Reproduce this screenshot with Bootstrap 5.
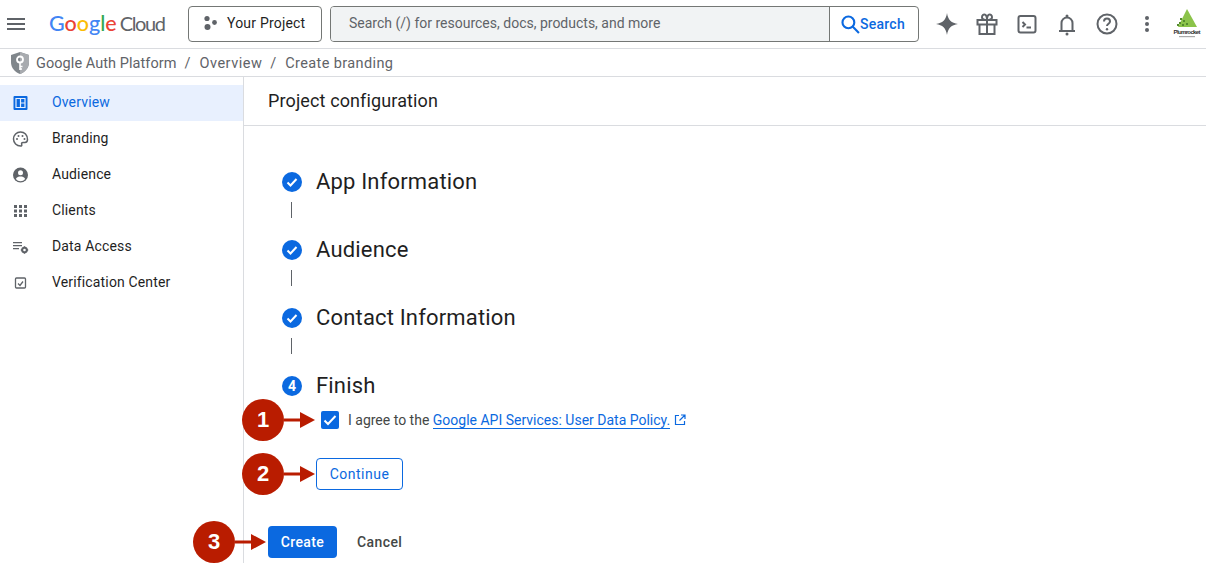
<!doctype html>
<html lang="en"><head><meta charset="utf-8"><title>Project configuration</title>
<link href="https://cdn.jsdelivr.net/npm/bootstrap@5.3.0/dist/css/bootstrap.min.css" rel="stylesheet">
<style>
html,body{height:100%;overflow:hidden}
body{font-family:Roboto,"Liberation Sans",sans-serif;color:#1f1f1f;font-size:14px;background:#fff;position:relative}
.topbar{height:49px;border-bottom:1px solid #dadce0;padding:0 0 0 7px}
.burger{width:18px;height:12px;border-top:2px solid #5f6368;border-bottom:2px solid #5f6368;position:relative;margin-right:24px;flex:none}
.burger::after{content:"";position:absolute;left:0;right:0;top:3px;height:2px;background:#5f6368}
.gc-logo{font-family:Lato,Roboto,sans-serif;font-size:21.500px;width:139px;line-height:1;margin-top:-1px;white-space:nowrap;flex:none}
.gc-logo b{font-weight:500}
.g-b{color:#4285f4}.g-r{color:#ea4335}.g-y{color:#fbbc04}.g-g{color:#34a853}.gc-logo .g-n{color:#5f6368;margin-left:3px;font-size:20px;font-weight:400;letter-spacing:-1.400px}
.proj-btn{width:134px;height:36px;border:1px solid #747775;border-radius:4px;background:#fff;font-size:14px;color:#1f1f1f;padding:0 0 2px 13px;letter-spacing:.2px;margin-right:8px;flex:none}
.proj-btn svg{margin-right:9px}
.searchbox{height:36px;width:589px;border:1px solid #747775;border-radius:4px;overflow:hidden;flex:none}
.search-in{flex:1;background:#f1f3f4;color:#5f6368;font-size:14px;padding-left:18px;padding-bottom:2px;border-right:1px solid #747775}
.search-go{width:88px;color:#0b69e0;font-weight:500;font-size:14px;padding-left:11px;gap:0;letter-spacing:.25px}
.tools{margin-left:16px;gap:16px;flex:none}
.tool{width:24px;height:24px;flex:none}
.brand-mark{margin-left:-2px;flex:none}
.brand-mark text{font-family:"Liberation Sans",sans-serif}
.crumbs{height:28px;border-bottom:1px solid #dadce0;padding:3px 0 0 10px;color:#5f6368;font-size:14.500px}
.crumbs .sep{margin:0 8px}
.crumbs .sep-a{margin-right:9px}
.crumbs svg{margin-right:6px;margin-top:-3px}
.crumb-a{letter-spacing:.06px}.crumb-b{letter-spacing:.5px}.crumb-c{letter-spacing:.38px}
.shell{height:calc(100% - 77px)}
.sidebar{width:244px;border-right:1px solid #dadce0;padding-top:8px;flex:none}
.sideitem{height:36px;padding:0 0 2px 10px;color:#1f1f1f;font-size:14px;gap:21px;text-decoration:none;letter-spacing:.15px}
.sideitem svg{width:21px;height:18px;flex:none;margin-top:2px}
.sideitem.on{background:#e8f0fe;color:#0b69e0}
.main-pane{flex:1;min-width:0}
.pane-head{height:49px;border-bottom:1px solid #dadce0;padding-left:24px;font-size:18px;font-weight:400;margin:0;color:#1f1f1f;letter-spacing:.12px}
.steps{padding:38px 0 0 38px}
.step{height:36px;gap:14px;font-size:22px;color:#1f1f1f;letter-spacing:.17px;padding-bottom:1px}
.step svg{width:20px;height:20px;flex:none}
.num{width:20px;height:20px;border-radius:50%;background:#0b69e0;color:#fff;font-size:14px;font-weight:700;margin-top:1px;flex:none}
.conn{height:32px;padding:2px 0 0 9px}
.conn i{display:block;width:1px;height:16px;background:#5f6368}
.agree{padding-left:39px;height:24px;margin-top:4px;gap:9px;font-size:14px;color:#444746}
.tick{width:18px;height:18px;background:#0b69e0;border-radius:2px;flex:none}
.agree a{color:#0b69e0;text-decoration:none;border-bottom:1px solid #0b69e0;line-height:18px}
.agree svg:last-child{margin-left:-5px}
.cont-btn{margin:26px 0 0 34px;width:87px;height:32px;border:1px solid #0b69e0;border-radius:4px;background:#fff;color:#0b69e0;font-size:14px;font-weight:400;padding:1px 0 0;letter-spacing:.5px;display:block}
.acts{margin:36px 0 0 -14px;gap:20px}
.make-btn{width:69px;height:32px;background:#0b69e0;border:0;border-radius:4px;color:#fff;font-weight:500;padding:1px 0 0;font-size:14px;letter-spacing:.35px}
.stop-btn{border:0;background:none;color:#444746;font-weight:500;padding:1px 0 0;font-size:14px;letter-spacing:.4px}
.callout{position:absolute;display:flex;align-items:center;height:42px;width:88px}
.callout span{width:42px;height:42px;border-radius:50%;background:#b91c00;color:#fff;font:700 22px "Liberation Sans",sans-serif;display:flex;align-items:center;justify-content:center;flex:none}
</style></head><body>
<header class="topbar d-flex align-items-center">
  <div class="burger"></div>
  <div class="gc-logo"><b class="g-b">G</b><b class="g-r">o</b><b class="g-y">o</b><b class="g-b">g</b><b class="g-g">l</b><b class="g-r">e</b><b class="g-n">Cloud</b></div>
  <button class="proj-btn d-flex align-items-center"><svg width="16" height="16" viewBox="0 0 16 16" fill="#5f6368"><circle cx="5" cy="3.500" r="2.600"/><circle cx="12.500" cy="7.500" r="2.400"/><circle cx="5.500" cy="12" r="3"/></svg>Your Project</button>
  <div class="searchbox d-flex">
    <div class="search-in d-flex align-items-center">Search (/) for resources, docs, products, and more</div>
    <div class="search-go d-flex align-items-center"><svg width="19" height="19" viewBox="0 0 18 18" fill="none" stroke="#0b69e0" stroke-width="2"><circle cx="7" cy="7" r="5.600"/><path d="M11 11l6 6"/></svg>Search</div>
  </div>
  <div class="tools d-flex align-items-center">
    <svg class="tool" viewBox="0 0 24 24" fill="#5f6368"><path d="M12 1c.8 6.500 4.500 10.200 11 11-6.500.8-10.200 4.500-11 11-.8-6.500-4.500-10.200-11-11 6.500-.8 10.200-4.500 11-11z"/></svg>
    <svg class="tool" viewBox="0 0 24 24" fill="none" stroke="#5f6368" stroke-width="2"><path d="M2.500 8h19v4.500h-19zM4.500 12.500V22h15v-9.500M12 8v14M12 8C9 8 7 6.800 7 5.200S8.500 2 10 2.700 12 6 12 8zM12 8c3 0 5-1.200 5-2.800S15.500 2 14 2.700 12 6 12 8z"/></svg>
    <svg class="tool" viewBox="0 0 24 24" fill="none" stroke="#5f6368" stroke-width="2"><rect x="3.500" y="4" width="17" height="16.500" rx="2"/><path d="M7.500 10l2.500 2.500-2.500 2.500M11.500 15.500h4.500"/></svg>
    <svg class="tool" viewBox="0 0 24 24" fill="none" stroke="#5f6368" stroke-width="2"><path d="M4 19h16M6.500 19v-8a5.500 5.500 0 0 1 11 0v8"/><circle cx="12" cy="22" r="1.500" fill="#5f6368" stroke="none"/><circle cx="12" cy="4" r="1.500" fill="#5f6368" stroke="none"/></svg>
    <svg class="tool" viewBox="0 0 24 24" fill="none" stroke="#5f6368" stroke-width="2"><circle cx="12" cy="12" r="9.500"/><path d="M9 9.500a3 3 0 0 1 6 0c0 2.200-3 2.300-3 4.500"/><circle cx="12" cy="17.300" r="1.200" fill="#5f6368" stroke="none"/></svg>
    <svg class="tool" viewBox="0 0 24 24" fill="#5f6368"><circle cx="12" cy="6" r="2"/><circle cx="12" cy="12" r="2"/><circle cx="12" cy="18" r="2"/></svg>
    <svg class="brand-mark" width="28" height="30" viewBox="0 0 28 30"><polygon points="14,0 24,18 5,18" fill="#8bc34a"/><g fill="#558b2f"><rect x="6" y="13" width="2" height="2"/><rect x="9" y="15" width="2" height="2"/><rect x="4" y="15" width="2" height="2"/><rect x="7" y="9" width="2" height="2"/><rect x="10" y="11" width="2" height="2"/><rect x="13" y="14" width="2" height="2"/></g><text x="14" y="24.500" text-anchor="middle" font-size="6" font-weight="700" fill="#333" textLength="27">Plumrocket</text><rect x="6" y="27" width="16" height="1.200" fill="#aaa"/></svg>
  </div>
</header>
<nav class="crumbs d-flex align-items-center">
  <svg width="20" height="22" viewBox="0 0 20 22"><path d="M10 0l9 3v7c0 6-4 10-9 12C5 20 1 16 1 10V3z" fill="#80868b"/><path d="M10 0l9 3v7c0 6-4 10-9 12z" fill="#a8abaf"/><circle cx="10" cy="7.500" r="3" fill="none" stroke="#fff" stroke-width="1.800"/><path d="M10 10.500V18M10 14.500h2.500M10 17h2" stroke="#fff" stroke-width="1.600"/></svg>
  <span class="crumb-a">Google Auth Platform</span><span class="sep sep-a">/</span><span class="crumb-b">Overview</span><span class="sep sep-a">/</span><span class="crumb-c">Create branding</span>
</nav>
<div class="shell d-flex">
  <aside class="sidebar">
    <a class="sideitem on d-flex align-items-center" href="#"><svg viewBox="0 0 21 18" fill="none"><rect x="3.500" y="2" width="14" height="14" rx="1" fill="#0b69e0"/><path d="M6 4.500h9v9H6zM10.500 4.500v9M10.500 9H15" stroke="#e8f0fe" stroke-width="1.200"/></svg>Overview</a>
    <a class="sideitem d-flex align-items-center" href="#"><svg viewBox="0 0 21 18" fill="none"><path d="M10.500 2a7 7 0 1 0 0 14c1.200 0 1.500-.8 1.200-1.600-.4-1 .2-2 1.300-2h2c1.500 0 2.500-1 2.500-2.900C17.500 5 14.500 2 10.500 2z" stroke="#5f6368" stroke-width="1.500"/><g fill="#5f6368"><circle cx="7" cy="9" r="1"/><circle cx="8.500" cy="6" r="1"/><circle cx="12.500" cy="6" r="1"/><circle cx="14.500" cy="9" r="1"/></g></svg>Branding</a>
    <a class="sideitem d-flex align-items-center" href="#"><svg viewBox="0 0 21 18"><circle cx="10.500" cy="9" r="7.500" fill="#5f6368"/><circle cx="10.500" cy="6.800" r="2.500" fill="#fff"/><path d="M5.800 13c1-2 2.800-2.500 4.700-2.500s3.700.5 4.700 2.500a6 6 0 0 1-9.400 0z" fill="#fff"/></svg>Audience</a>
    <a class="sideitem d-flex align-items-center" href="#"><svg viewBox="0 0 21 18" fill="#5f6368"><path d="M4 3h3v3H4zM9 3h3v3H9zM14 3h3v3h-3zM4 7.500h3v3H4zM9 7.500h3v3H9zM14 7.500h3v3h-3zM4 12h3v3H4zM9 12h3v3H9zM14 12h3v3h-3z"/></svg>Clients</a>
    <a class="sideitem d-flex align-items-center" href="#"><svg viewBox="0 0 21 18" fill="#5f6368"><path d="M3 4h9v1.300H3zM3 7h9v1.300H3zM3 10h6v1.300H3z"/><circle cx="14.500" cy="12" r="2.300" fill="none" stroke="#5f6368" stroke-width="2"/><path d="M14.500 8.300v1.500M14.500 14.200v1.500M10.800 12h1.500M16.700 12h1.500" stroke="#5f6368" stroke-width="1.500"/></svg>Data Access</a>
    <a class="sideitem d-flex align-items-center" href="#"><svg viewBox="0 0 21 18" fill="none" stroke="#5f6368" stroke-width="1.300"><rect x="5.500" y="4" width="10" height="10" rx="1"/><path d="M8 9.500l2 2 3-4"/></svg>Verification Center</a>
  </aside>
  <main class="main-pane">
    <h1 class="pane-head d-flex align-items-center">Project configuration</h1>
    <div class="steps">
      <div class="step d-flex align-items-center"><svg viewBox="0 0 20 20"><circle cx="10" cy="10" r="10" fill="#0b69e0"/><path d="M5.500 10.500l3 3 6-6.500" fill="none" stroke="#fff" stroke-width="2"/></svg>App Information</div>
      <div class="conn"><i></i></div>
      <div class="step d-flex align-items-center"><svg viewBox="0 0 20 20"><circle cx="10" cy="10" r="10" fill="#0b69e0"/><path d="M5.500 10.500l3 3 6-6.500" fill="none" stroke="#fff" stroke-width="2"/></svg>Audience</div>
      <div class="conn"><i></i></div>
      <div class="step d-flex align-items-center"><svg viewBox="0 0 20 20"><circle cx="10" cy="10" r="10" fill="#0b69e0"/><path d="M5.500 10.500l3 3 6-6.500" fill="none" stroke="#fff" stroke-width="2"/></svg>Contact Information</div>
      <div class="conn"><i></i></div>
      <div class="step d-flex align-items-center"><span class="num d-flex align-items-center justify-content-center">4</span>Finish</div>
      <div class="agree d-flex align-items-center">
        <svg class="tick" viewBox="0 0 18 18"><path d="M3.500 9.500l3.500 3.500 7.500-8" fill="none" stroke="#fff" stroke-width="2"/></svg>
        <span>I agree to the <a href="#">Google API Services: User Data Policy.</a></span>
        <svg width="12" height="12" viewBox="0 0 12 12" fill="none" stroke="#0b69e0" stroke-width="1.200"><path d="M5 1.500H1.500v9h9V7M7 1h4v4M11 1L5.500 6.500"/></svg>
      </div>
      <button class="cont-btn">Continue</button>
      <div class="acts d-flex align-items-center"><button class="make-btn">Create</button><button class="stop-btn">Cancel</button></div>
    </div>
  </main>
</div>
<div class="callout" style="left:242px;top:399px"><span>1</span><svg width="31" height="18" viewBox="0 0 31 18"><path d="M0 7.500h16V1l15 8-15 8V10.500H0z" fill="#b91c00"/></svg></div>
<div class="callout" style="left:242px;top:453px"><span>2</span><svg width="31" height="18" viewBox="0 0 31 18"><path d="M0 7.500h16V1l15 8-15 8V10.500H0z" fill="#b91c00"/></svg></div>
<div class="callout" style="left:193px;top:521px"><span>3</span><svg width="31" height="18" viewBox="0 0 31 18"><path d="M0 7.500h16V1l15 8-15 8V10.500H0z" fill="#b91c00"/></svg></div>
<script src="https://cdn.jsdelivr.net/npm/bootstrap@5.3.0/dist/js/bootstrap.bundle.min.js"></script>
</body></html>
